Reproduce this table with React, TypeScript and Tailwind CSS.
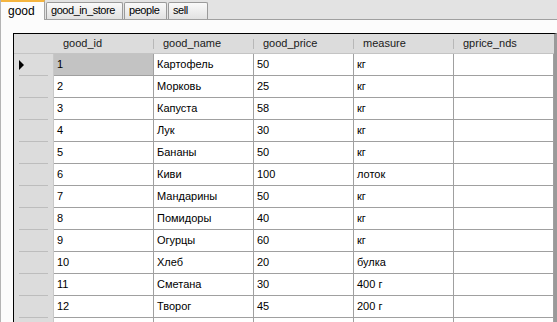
import React from "react";

interface Good {
  id: string;
  name: string;
  price: string;
  measure: string;
  nds: string;
}

const goods: Good[] = [
  { id: "1", name: "Картофель", price: "50", measure: "кг", nds: "" },
  { id: "2", name: "Морковь", price: "25", measure: "кг", nds: "" },
  { id: "3", name: "Капуста", price: "58", measure: "кг", nds: "" },
  { id: "4", name: "Лук", price: "30", measure: "кг", nds: "" },
  { id: "5", name: "Бананы", price: "50", measure: "кг", nds: "" },
  { id: "6", name: "Киви", price: "100", measure: "лоток", nds: "" },
  { id: "7", name: "Мандарины", price: "50", measure: "кг", nds: "" },
  { id: "8", name: "Помидоры", price: "40", measure: "кг", nds: "" },
  { id: "9", name: "Огурцы", price: "60", measure: "кг", nds: "" },
  { id: "10", name: "Хлеб", price: "20", measure: "булка", nds: "" },
  { id: "11", name: "Сметана", price: "30", measure: "400 г", nds: "" },
  { id: "12", name: "Творог", price: "45", measure: "200 г", nds: "" },
  { id: "", name: "", price: "", measure: "", nds: "" },
];

const columns = ["good_id", "good_name", "good_price", "measure", "gprice_nds"];

const tabs = [
  { label: "good_in_store", width: "w-[77px]" },
  { label: "people", width: "w-[43px]" },
  { label: "sell", width: "w-[40px]" },
];

function RowArrow() {
  return (
    <svg width="6" height="10" viewBox="0 0 6 10">
      <path d="M0 0 L5 5 L0 10 Z" fill="#000" />
    </svg>
  );
}

export default function App() {
  return (
    <div
      className="w-[557px] h-[322px] overflow-hidden bg-[#fcfcfc] border-l border-[#b4b4b4] text-[11px] text-black"
      style={{ fontFamily: '"Liberation Sans", Arial, sans-serif' }}
    >
      {/* tab strip */}
      <div className="flex items-end h-[20px] bg-[#e3e3e3]">
        <div className="w-[44px] h-[20px] bg-[#fcfcfc] border-t-2 border-[#f5b53f] border-r border-r-[#a4a4a4] pl-[7px] pt-[2px] text-[12px] leading-[14px]">
          good
        </div>
        <div className="flex items-end flex-1 h-[20px] border-b border-[#a0a0a0] pl-px gap-px">
          {tabs.map((tab) => (
            <div
              key={tab.label}
              className={`${tab.width} h-[17px] border border-b-0 border-[#9a9a9a] rounded-t-[2px] bg-gradient-to-b from-[#fafafa] to-[#e2e2e2] pl-[4px] leading-[15px] tracking-[-0.45px] whitespace-nowrap`}
            >
              {tab.label}
            </div>
          ))}
          <div className="flex-1" />
        </div>
      </div>

      {/* grid */}
      <div className="pl-[12px] pt-[13px]">
        <div className="border-t border-l border-black border-r-[3px] border-r-[#9a9a9a]">
          <div className="flex h-[20px] bg-[#dcdcdc] border-b border-[#c4c4c4]">
            <div className="w-[40px] shrink-0" />
            {columns.map((col) => (
              <div key={col} className="w-[100px] shrink-0 flex items-center justify-between">
                <span className="pl-[9px] text-[#1a1a1a]">{col}</span>
                {col !== "gprice_nds" && <span className="w-px h-[10px] bg-[#b8b8b8]" />}
              </div>
            ))}
          </div>
          {goods.map((g, i) => {
            const cells = [g.id, g.name, g.price, g.measure, g.nds];
            return (
              <div key={i} className="flex h-[22px]">
                <div className="w-[40px] shrink-0 bg-[#dcdcdc] border-r border-[#c8c8c8] flex flex-col">
                  <div className="flex-1 flex items-center pl-[5px]">{i === 0 && <RowArrow />}</div>
                  <div className="h-px mx-[5px] bg-[#bdbdbd]" />
                </div>
                {cells.map((c, j) => (
                  <div
                    key={j}
                    className={`w-[100px] shrink-0 flex items-center pl-[3px] border-r border-b border-[#a0a0a0] whitespace-nowrap ${
                      i === 0 && j === 0 ? "bg-[#c3c3c3]" : "bg-white"
                    }`}
                  >
                    {c}
                  </div>
                ))}
              </div>
            );
          })}
        </div>
      </div>
    </div>
  );
}
